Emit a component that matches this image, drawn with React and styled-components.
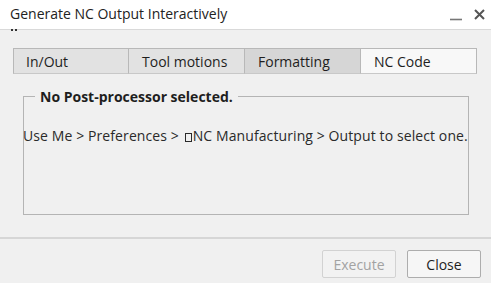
import React from 'react';
import styled, { createGlobalStyle } from 'styled-components';

const GlobalStyle = createGlobalStyle`
  html, body {
    margin: 0;
    padding: 0;
    background: #f0f0f0;
  }
  body {
    font-family: "Open Sans", "Noto Sans", sans-serif;
    color: #1e1e1e;
  }
`;

const Dialog = styled.div`
  width: 491px;
  height: 283px;
  display: flex;
  flex-direction: column;
  background: #f0f0f0;
  overflow: hidden;
`;

const TitleBar = styled.div`
  height: 30px;
  flex: none;
  display: flex;
  align-items: center;
  justify-content: space-between;
  padding: 0 6px 0 10px;
  background: #ffffff;
  border-bottom: 1px solid #d9d9d9;
  box-sizing: border-box;
  position: relative;
`;

const Title = styled.span`
  font-size: 14px;
  color: #222;
  margin-top: -2px;
`;

// two tiny dots that hang under the title bar in the original
const Tick = styled.span`
  position: absolute;
  left: 11px;
  bottom: -2px;
  width: 6px;
  height: 2px;
  border-left: 2px solid #333;
  border-right: 2px solid #333;
  box-sizing: border-box;
`;

const WinButtons = styled.div`
  display: flex;
  align-items: center;
  gap: 12px;
`;

const Body = styled.div`
  flex: 1;
  display: flex;
  flex-direction: column;
  padding: 18px 14px 0 13px;
`;

const TabRow = styled.div`
  display: flex;
  height: 26px;
`;

const Tab = styled.div`
  width: 116px;
  box-sizing: border-box;
  display: flex;
  align-items: center;
  padding-left: ${(p) => (p.$first ? '12px' : '13px')};
  font-size: 14px;
  color: #1e1e1e;
  background: ${(p) => (p.$active ? '#f8f8f8' : p.$dark ? '#d6d6d6' : '#e2e2e2')};
  border: 1px solid #b8b8b8;
  border-left: ${(p) => (p.$first ? '1px solid #b8b8b8' : 'none')};
  border-bottom: 1px solid #c8c8c8;
`;

const Group = styled.fieldset`
  margin: 13px 8px 0 10px;
  height: 128px;
  box-sizing: border-box;
  border: 1px solid #b4b4b4;
  padding: 0;
  min-width: 0;
`;

const Legend = styled.legend`
  margin-left: 11px;
  padding: 0 5px;
  font-size: 14px;
  font-weight: 700;
  color: #1e1e1e;
`;

const Message = styled.div`
  margin: 20px 0 0 -1px;
  font-size: 14px;
  letter-spacing: 0.1px;
  white-space: nowrap;
  color: #2a2a2a;
`;

// missing-glyph box shown in the original text
const Tofu = styled.span`
  display: inline-block;
  width: 7px;
  height: 9px;
  margin: 0 1px 0 2px;
  border: 1px solid #2a2a2a;
  box-sizing: border-box;
  vertical-align: -0.5px;
`;

const Separator = styled.div`
  margin: 22px -14px 0 -13px;
  height: 2px;
  background: #d6d6d6;
`;

const Footer = styled.div`
  display: flex;
  justify-content: flex-end;
  gap: 11px;
  padding-top: 11px;
  margin-right: -4px;
`;

const Button = styled.button`
  width: 74px;
  height: 28px;
  box-sizing: border-box;
  font-family: inherit;
  font-size: 14px;
  border-radius: 2px;
  border: 1px solid ${(p) => (p.disabled ? '#d2d2d2' : '#adadad')};
  background: ${(p) => (p.disabled ? '#f2f2f2' : '#f6f6f6')};
  color: ${(p) => (p.disabled ? '#a2a2a2' : '#1e1e1e')};
  padding: 0;
`;

const tabs = ['In/Out', 'Tool motions', 'Formatting', 'NC Code'];

export default function App() {
  return (
    <>
      <GlobalStyle />
      <Dialog>
        <TitleBar>
          <Title>Generate NC Output Interactively</Title>
          <Tick />
          <WinButtons>
            <svg width="12" height="12" viewBox="0 0 12 12">
              <path d="M0 10.5 H12" stroke="#777" strokeWidth="1.6" />
            </svg>
            <svg width="11" height="11" viewBox="0 0 11 11">
              <path d="M1 1 L10 10 M10 1 L1 10" stroke="#555" strokeWidth="2" />
            </svg>
          </WinButtons>
        </TitleBar>
        <Body>
          <TabRow>
            {tabs.map((t, i) => (
              <Tab key={t} $first={i === 0} $dark={i === 2} $active={i === 3}>
                {t}
              </Tab>
            ))}
          </TabRow>
          <Group>
            <Legend>No Post-processor selected.</Legend>
            <Message>
              Use Me &gt; Preferences &gt; <Tofu />NC Manufacturing &gt; Output to select one.
            </Message>
          </Group>
          <Separator />
          <Footer>
            <Button disabled>Execute</Button>
            <Button>Close</Button>
          </Footer>
        </Body>
      </Dialog>
    </>
  );
}
